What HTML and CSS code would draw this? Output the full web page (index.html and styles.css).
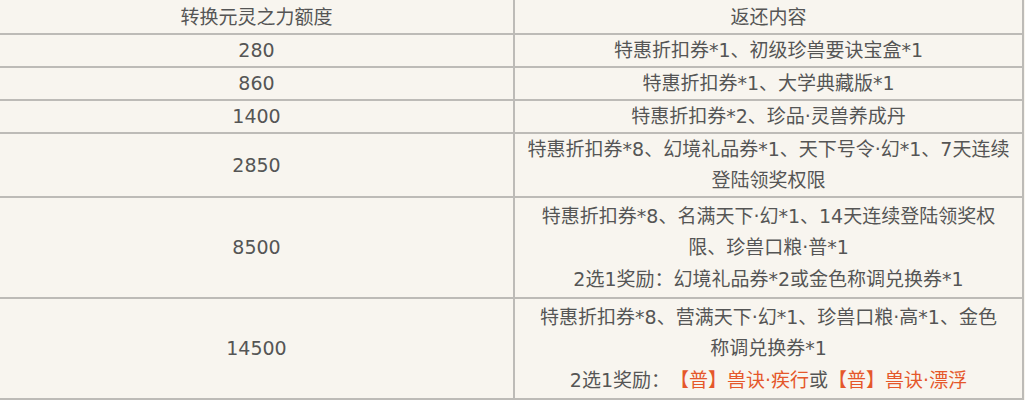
FILE: index.html
```html
<!DOCTYPE html>
<html lang="zh-CN">
<head>
<meta charset="utf-8">
<title>返还内容</title>
<link rel="stylesheet" href="styles.css">
</head>
<body>
<table class="rewards">
  <thead>
    <tr><th class="amount">转换元灵之力额度</th><th class="content">返还内容</th></tr>
  </thead>
  <tbody>
    <tr><td class="amount">280</td><td class="content">特惠折扣券*1、初级珍兽要诀宝盒*1</td></tr>
    <tr><td class="amount">860</td><td class="content">特惠折扣券*1、大学典藏版*1</td></tr>
    <tr><td class="amount">1400</td><td class="content">特惠折扣券*2、珍品·灵兽养成丹</td></tr>
    <tr><td class="amount">2850</td><td class="content">特惠折扣券*8、幻境礼品券*1、天下号令·幻*1、7天连续登陆领奖权限</td></tr>
    <tr>
      <td class="amount">8500</td>
      <td class="content tall">
        <p>特惠折扣券*8、名满天下·幻*1、14天连续登陆领奖权限、珍兽口粮·普*1</p>
        <p class="choice">2选1奖励：幻境礼品券*2或金色称调兑换券*1</p>
      </td>
    </tr>
    <tr>
      <td class="amount">14500</td>
      <td class="content tall">
        <p>特惠折扣券*8、营满天下·幻*1、珍兽口粮·高*1、金色称调兑换券*1</p>
        <p class="choice">2选1奖励：<span class="hl">【普】兽诀·疾行</span>或<span class="hl">【普】兽诀·漂浮</span></p>
      </td>
    </tr>
  </tbody>
</table>
</body>
</html>
```

FILE: styles.css
```css
html, body {
  margin: 0;
  padding: 0;
  background: #f8f5ef;
}

.rewards {
  width: 1024px;
  border-collapse: separate;
  border-spacing: 0;
  table-layout: fixed;
  font-family: "DejaVu Sans", "Noto Sans CJK SC", sans-serif;
  font-size: 19px;
  color: #555555;
  background: #f8f5ef;
  text-spacing-trim: space-all;
}

.rewards th,
.rewards td {
  font-weight: normal;
  text-align: center;
  vertical-align: middle;
  line-height: 31px;
  padding: 0 6px;
  border-bottom: 2px solid #bdbbb7;
}

.rewards th {
  padding-top: 2px;
}

.rewards .amount {
  width: 501px;
  border-right: 2px solid #bdbbb7;
}

.rewards .content {
  border-right: 2px solid #bdbbb7;
}

.rewards .tall {
  padding: 3px 16px 2px;
}

.rewards p {
  margin: 0;
}

.rewards .choice {
  margin-top: 1px;
}

.hl {
  color: #e5572b;
}
```
